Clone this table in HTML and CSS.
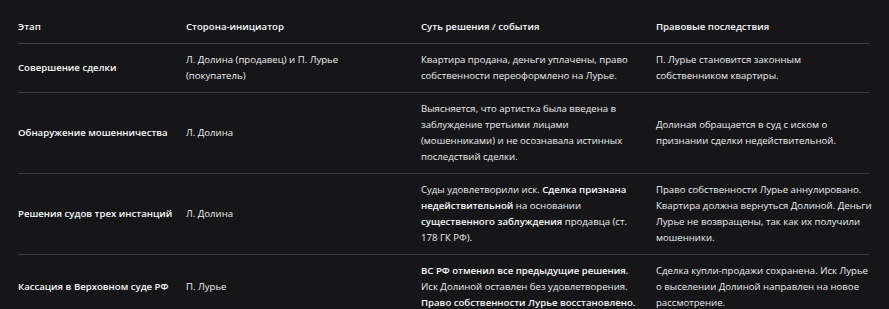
FILE: index.html
```html
<!DOCTYPE html>
<html lang="ru">
<head>
<meta charset="utf-8">
<link rel="stylesheet" href="styles.css">
</head>
<body>
<div class="wrap">
<table class="tbl">
<colgroup><col class="c1"><col class="c2"><col class="c3"><col class="c4"></colgroup>
<thead>
<tr><th>Этап</th><th>Сторона-инициатор</th><th>Суть решения / события</th><th>Правовые последствия</th></tr>
</thead>
<tbody>
<tr>
<td class="stage">Совершение сделки</td>
<td>Л. Долина (продавец) и П. Лурье<br>(покупатель)</td>
<td>Квартира продана, деньги уплачены, право<br>собственности переоформлено на Лурье.</td>
<td>П. Лурье становится законным<br>собственником квартиры.</td>
</tr>
<tr>
<td class="stage">Обнаружение мошенничества</td>
<td>Л. Долина</td>
<td>Выясняется, что артистка была введена в<br>заблуждение третьими лицами<br>(мошенниками) и не осознавала истинных<br>последствий сделки.</td>
<td>Долиная обращается в суд с иском о<br>признании сделки недействительной.</td>
</tr>
<tr>
<td class="stage">Решения судов трех инстанций</td>
<td>Л. Долина</td>
<td>Суды удовлетворили иск. <b>Сделка признана<br>недействительной</b> на основании<br><b>существенного заблуждения</b> продавца (ст.<br>178 ГК РФ).</td>
<td>Право собственности Лурье аннулировано.<br>Квартира должна вернуться Долиной. Деньги<br>Лурье не возвращены, так как их получили<br>мошенники.</td>
</tr>
<tr>
<td class="stage">Кассация в Верховном суде РФ</td>
<td>П. Лурье</td>
<td><b>ВС РФ отменил все предыдущие решения.</b><br>Иск Долиной оставлен без удовлетворения.<br><b>Право собственности Лурье восстановлено.</b></td>
<td>Сделка купли-продажи сохранена. Иск Лурье<br>о выселении Долиной направлен на новое<br>рассмотрение.</td>
</tr>
</tbody>
</table>
</div>
</body>
</html>
```

FILE: styles.css
```css
html, body {
  margin: 0;
  padding: 0;
  background: #161618;
}
body {
  font-family: "Open Sans", "Noto Sans", sans-serif;
  font-size: 9.6px;
  line-height: 16px;
  color: #ececee;
  overflow: hidden;
}
.wrap {
  padding: 11px 20px 0 18px;
}
.tbl {
  border-collapse: collapse;
  table-layout: fixed;
  width: 851px;
}
.c1 { width: 168px; }
.c2 { width: 235px; }
.c3 { width: 235px; }
.c4 { width: 213px; }
.tbl th, .tbl td {
  text-align: left;
  vertical-align: middle;
  white-space: nowrap;
  padding: 8px 18px 8px 0;
  border-bottom: 1px solid #3a3a3d;
}
.tbl th:last-child, .tbl td:last-child {
  padding-right: 0;
}
.tbl th {
  font-weight: 600;
  color: #f6f6f8;
  border-bottom-color: #414144;
}
.tbl td.stage {
  font-weight: 600;
  color: #f6f6f8;
}
.tbl b {
  font-weight: 600;
  color: #f6f6f8;
}
```
